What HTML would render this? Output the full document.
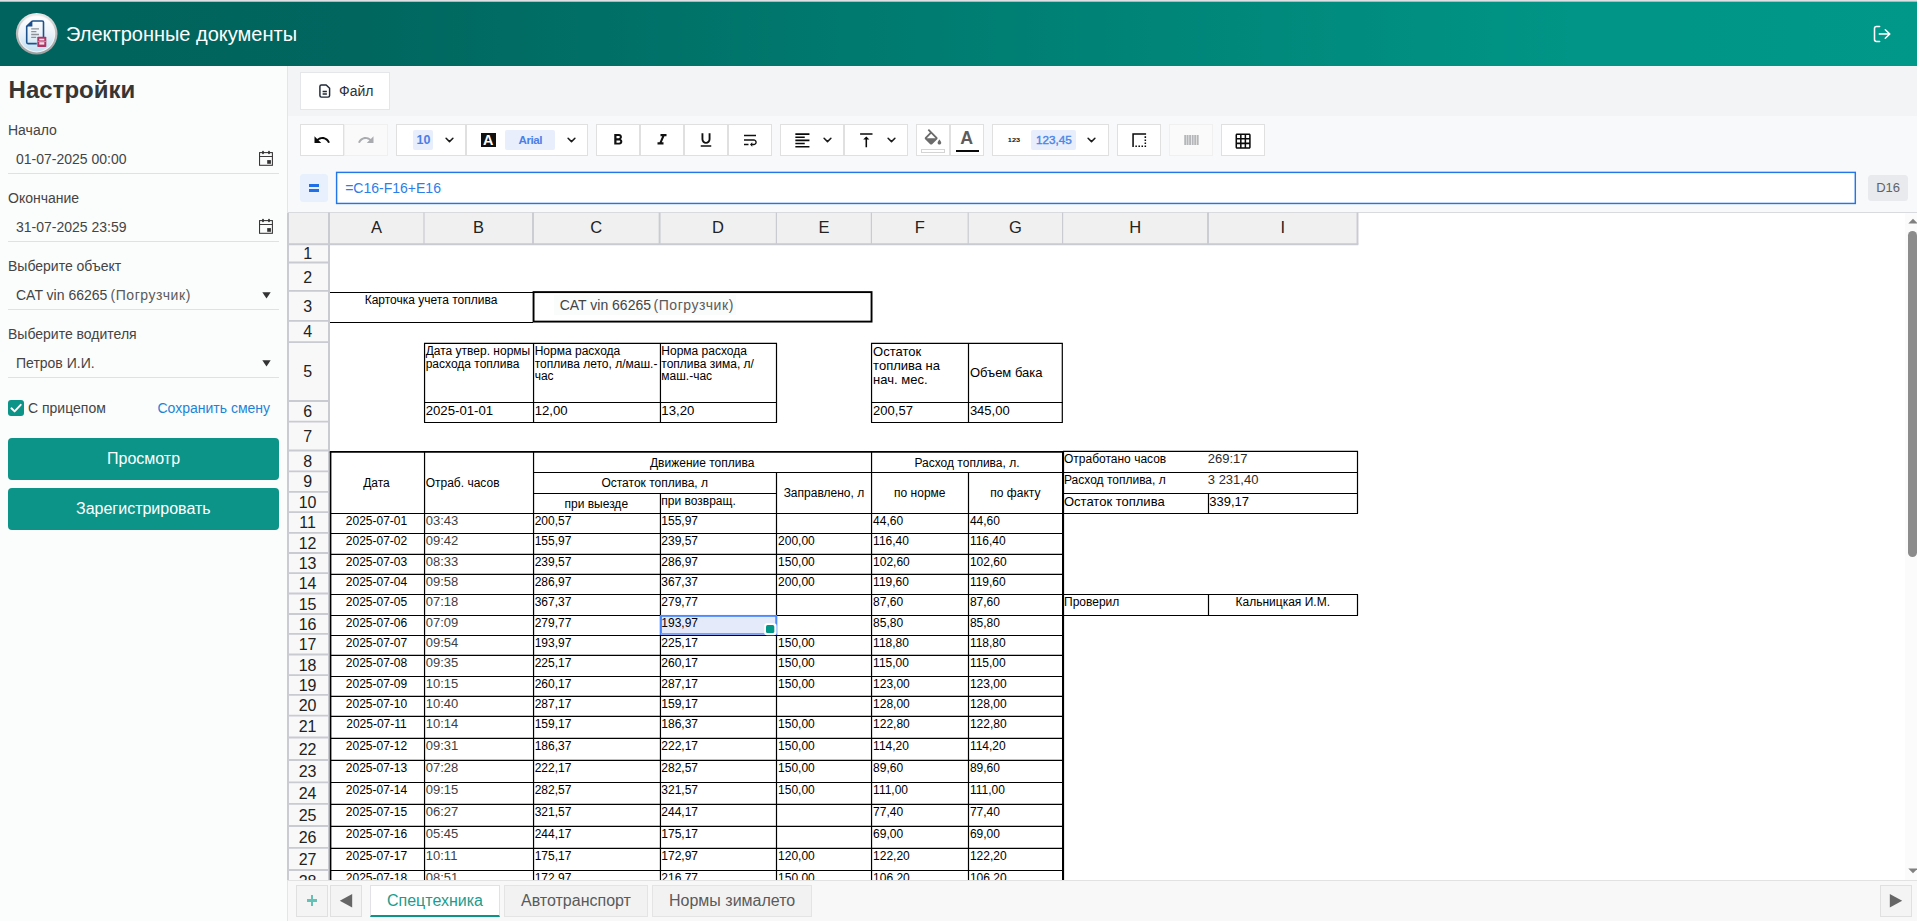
<!DOCTYPE html><html><head><meta charset="utf-8"><title>Электронные документы</title><style>
*{box-sizing:border-box;margin:0;padding:0}
html,body{width:1917px;height:921px;overflow:hidden;background:#fff}
body{font-family:"Liberation Sans",sans-serif;position:relative;color:#333}
.abs{position:absolute}
.t{position:absolute;white-space:nowrap;line-height:1}
#topline{left:0;top:0;width:1917px;height:2px;background:linear-gradient(180deg,#e0e0e4 0,#e0e0e4 55%,#b9b2b6 56%,#b9b2b6 100%)}
#hdr{left:0;top:2px;width:1917px;height:64px;background:linear-gradient(90deg,#00635d 0%,#00665e 18%,#009586 82%,#009889 100%)}
#side{left:0;top:66px;width:288px;height:855px;background:#fbfcfc;border-right:1px solid #e3e5e8}
#band1{left:288px;top:66px;width:1629px;height:50px;background:#f3f4f6}
#band2{left:288px;top:116px;width:1629px;height:96px;background:#f8f9fb}
#sheet{left:288px;top:212px;width:1629px;height:668px;background:#fff;overflow:hidden}
#tabs{left:288px;top:880px;width:1629px;height:41px;background:#f8f8f8;border-top:1px solid #e2e2e2}
.lbl{font-size:14.5px;color:#444}
.inp{font-size:14.5px;color:#444}
.uline{height:1px;background:#dfe1e4;left:8px;width:271px}
.btn{left:8px;width:271px;height:42px;background:#0d9488;border-radius:4px}
.tb{position:absolute;background:#fff;border:1px solid #e0e0e1}
.tb.dis{background:#fafafa;border-color:#f0f0f1}
</style></head><body><div id="topline" class="abs"></div><div id="hdr" class="abs"></div><div id="side" class="abs"></div><div id="band1" class="abs"></div><div id="band2" class="abs"></div><div id="sheet" class="abs"><div class="abs" style="left:-288px;top:-212px;width:1917px;height:921px"><div class="abs" style="left:288px;top:212px;width:1069.5px;height:32px;background:#f0f0f0"></div><div class="abs" style="left:288px;top:244px;width:41px;height:640px;background:#f8f8f8"></div><div class="abs" style="left:554px;top:294.5px;width:182px;height:20.5px;background:#fafbfb"></div><svg class="abs" style="left:0;top:0" width="1917" height="921" viewBox="0 0 1917 921"><path d="M288.00 212.50L1917.00 212.50" stroke="#d9dadd" stroke-width="1.0"/><path d="M288.00 244.20L1358.30 244.20" stroke="#c9cad2" stroke-width="1.9"/><path d="M329.00 212.50L329.00 880.00" stroke="#c9cad2" stroke-width="2.0"/><path d="M424.00 212.50L424.00 244.50" stroke="#c9cad2" stroke-width="1.2"/><path d="M533.00 212.50L533.00 244.50" stroke="#c9cad2" stroke-width="1.9"/><path d="M659.60 212.50L659.60 244.50" stroke="#c9cad2" stroke-width="1.9"/><path d="M776.40 212.50L776.40 244.50" stroke="#c9cad2" stroke-width="1.2"/><path d="M871.40 212.50L871.40 244.50" stroke="#c9cad2" stroke-width="1.2"/><path d="M968.20 212.50L968.20 244.50" stroke="#c9cad2" stroke-width="1.2"/><path d="M1062.60 212.50L1062.60 244.50" stroke="#c9cad2" stroke-width="1.2"/><path d="M1208.00 212.50L1208.00 244.50" stroke="#c9cad2" stroke-width="1.9"/><path d="M1357.50 212.50L1357.50 244.50" stroke="#c9cad2" stroke-width="1.9"/><path d="M288.00 262.50L329.50 262.50" stroke="#c9cad2" stroke-width="1.8"/><path d="M288.00 290.90L329.50 290.90" stroke="#c9cad2" stroke-width="1.8"/><path d="M288.00 320.80L329.50 320.80" stroke="#c9cad2" stroke-width="1.8"/><path d="M288.00 342.20L329.50 342.20" stroke="#c9cad2" stroke-width="1.8"/><path d="M288.00 401.00L329.50 401.00" stroke="#c9cad2" stroke-width="1.8"/><path d="M288.00 421.60L329.50 421.60" stroke="#c9cad2" stroke-width="1.8"/><path d="M288.00 450.50L329.50 450.50" stroke="#c9cad2" stroke-width="1.8"/><path d="M288.00 471.30L329.50 471.30" stroke="#c9cad2" stroke-width="1.8"/><path d="M288.00 491.90L329.50 491.90" stroke="#c9cad2" stroke-width="1.8"/><path d="M288.00 512.20L329.50 512.20" stroke="#c9cad2" stroke-width="1.8"/><path d="M288.00 532.90L329.50 532.90" stroke="#c9cad2" stroke-width="1.8"/><path d="M288.00 553.00L329.50 553.00" stroke="#c9cad2" stroke-width="1.8"/><path d="M288.00 573.10L329.50 573.10" stroke="#c9cad2" stroke-width="1.8"/><path d="M288.00 593.50L329.50 593.50" stroke="#c9cad2" stroke-width="1.8"/><path d="M288.00 614.00L329.50 614.00" stroke="#c9cad2" stroke-width="1.8"/><path d="M288.00 633.90L329.50 633.90" stroke="#c9cad2" stroke-width="1.8"/><path d="M288.00 654.50L329.50 654.50" stroke="#c9cad2" stroke-width="1.8"/><path d="M288.00 675.10L329.50 675.10" stroke="#c9cad2" stroke-width="1.8"/><path d="M288.00 694.90L329.50 694.90" stroke="#c9cad2" stroke-width="1.8"/><path d="M288.00 715.60L329.50 715.60" stroke="#c9cad2" stroke-width="1.8"/><path d="M288.00 737.50L329.50 737.50" stroke="#c9cad2" stroke-width="1.8"/><path d="M288.00 760.00L329.50 760.00" stroke="#c9cad2" stroke-width="1.8"/><path d="M288.00 782.30L329.50 782.30" stroke="#c9cad2" stroke-width="1.8"/><path d="M288.00 803.80L329.50 803.80" stroke="#c9cad2" stroke-width="1.8"/><path d="M288.00 826.00L329.50 826.00" stroke="#c9cad2" stroke-width="1.8"/><path d="M288.00 847.80L329.50 847.80" stroke="#c9cad2" stroke-width="1.8"/><path d="M288.00 870.00L329.50 870.00" stroke="#c9cad2" stroke-width="1.8"/><path d="M330.00 292.50L533.00 292.50" stroke="#000" stroke-width="1.2"/><path d="M330.00 322.50L533.00 322.50" stroke="#000" stroke-width="1.2"/><rect x="533.55" y="292.10" width="338.00" height="29.50" fill="none" stroke="#000" stroke-width="1.9"/><path d="M424.05 343.30L777.00 343.30" stroke="#000" stroke-width="1.2"/><path d="M424.05 402.50L777.00 402.50" stroke="#000" stroke-width="1.2"/><path d="M424.05 422.50L777.00 422.50" stroke="#000" stroke-width="1.2"/><path d="M424.55 343.30L424.55 422.50" stroke="#000" stroke-width="1.2"/><path d="M533.55 343.30L533.55 422.50" stroke="#000" stroke-width="1.2"/><path d="M660.45 343.30L660.45 422.50" stroke="#000" stroke-width="1.2"/><path d="M776.50 343.30L776.50 422.50" stroke="#000" stroke-width="1.2"/><path d="M871.05 343.30L1062.80 343.30" stroke="#000" stroke-width="1.2"/><path d="M871.05 402.50L1062.80 402.50" stroke="#000" stroke-width="1.2"/><path d="M871.05 422.50L1062.80 422.50" stroke="#000" stroke-width="1.2"/><path d="M871.55 343.30L871.55 422.50" stroke="#000" stroke-width="1.2"/><path d="M968.50 343.30L968.50 422.50" stroke="#000" stroke-width="1.2"/><path d="M1062.30 343.30L1062.30 422.50" stroke="#000" stroke-width="1.2"/><path d="M329.80 451.85L1064.00 451.85" stroke="#000" stroke-width="1.9"/><path d="M330.60 451.85L330.60 881.00" stroke="#000" stroke-width="1.6"/><path d="M1063.05 450.95L1063.05 881.00" stroke="#000" stroke-width="2.1"/><path d="M424.55 451.85L424.55 881.00" stroke="#000" stroke-width="1.2"/><path d="M533.55 451.85L533.55 881.00" stroke="#000" stroke-width="1.2"/><path d="M871.55 451.85L871.55 881.00" stroke="#000" stroke-width="1.2"/><path d="M660.45 493.50L660.45 881.00" stroke="#000" stroke-width="1.2"/><path d="M776.50 472.50L776.50 881.00" stroke="#000" stroke-width="1.2"/><path d="M968.50 472.50L968.50 881.00" stroke="#000" stroke-width="1.2"/><path d="M533.55 472.50L1063.05 472.50" stroke="#000" stroke-width="1.2"/><path d="M533.55 493.50L776.50 493.50" stroke="#000" stroke-width="1.2"/><path d="M330.00 513.50L1063.05 513.50" stroke="#000" stroke-width="1.2"/><path d="M330.00 533.50L1063.05 533.50" stroke="#000" stroke-width="1.2"/><path d="M330.00 554.45L1063.05 554.45" stroke="#000" stroke-width="1.2"/><path d="M330.00 574.45L1063.05 574.45" stroke="#000" stroke-width="1.2"/><path d="M330.00 594.50L1063.05 594.50" stroke="#000" stroke-width="1.2"/><path d="M330.00 615.50L1063.05 615.50" stroke="#000" stroke-width="1.2"/><path d="M330.00 635.50L1063.05 635.50" stroke="#000" stroke-width="1.2"/><path d="M330.00 655.45L1063.05 655.45" stroke="#000" stroke-width="1.2"/><path d="M330.00 676.50L1063.05 676.50" stroke="#000" stroke-width="1.2"/><path d="M330.00 696.45L1063.05 696.45" stroke="#000" stroke-width="1.2"/><path d="M330.00 716.45L1063.05 716.45" stroke="#000" stroke-width="1.2"/><path d="M330.00 738.45L1063.05 738.45" stroke="#000" stroke-width="1.2"/><path d="M330.00 760.45L1063.05 760.45" stroke="#000" stroke-width="1.2"/><path d="M330.00 782.50L1063.05 782.50" stroke="#000" stroke-width="1.2"/><path d="M330.00 804.45L1063.05 804.45" stroke="#000" stroke-width="1.2"/><path d="M330.00 826.45L1063.05 826.45" stroke="#000" stroke-width="1.2"/><path d="M330.00 848.45L1063.05 848.45" stroke="#000" stroke-width="1.2"/><path d="M330.00 870.50L1063.05 870.50" stroke="#000" stroke-width="1.2"/><path d="M1063.05 451.45L1358.00 451.45" stroke="#000" stroke-width="1.2"/><path d="M1063.05 472.50L1358.00 472.50" stroke="#000" stroke-width="1.2"/><path d="M1063.05 493.50L1358.00 493.50" stroke="#000" stroke-width="1.2"/><path d="M1063.05 513.50L1358.00 513.50" stroke="#000" stroke-width="1.2"/><path d="M1357.50 451.00L1357.50 513.50" stroke="#000" stroke-width="1.2"/><path d="M1208.50 493.50L1208.50 513.50" stroke="#000" stroke-width="1.2"/><path d="M1063.05 594.50L1358.00 594.50" stroke="#000" stroke-width="1.2"/><path d="M1063.05 615.50L1358.00 615.50" stroke="#000" stroke-width="1.2"/><path d="M1208.50 594.50L1208.50 615.50" stroke="#000" stroke-width="1.2"/><path d="M1357.50 594.50L1357.50 615.50" stroke="#000" stroke-width="1.2"/><rect x="661.0" y="615.9" width="115.2" height="18.1" fill="#e5eafb" stroke="#4b89ff" stroke-width="1.9"/><path d="M661 634.1H776" stroke="#86aaf8" stroke-width="1.6"/><rect x="764.2" y="623.3" width="12.4" height="11.9" rx="2.6" fill="#fff"/><rect x="766.0" y="625.1" width="8.3" height="8.0" rx="1.6" fill="#009688"/></svg><span class="t" style="left:356.50px;width:40px;text-align:center;top:219px;font-size:16.5px;color:#222">A</span><span class="t" style="left:458.50px;width:40px;text-align:center;top:219px;font-size:16.5px;color:#222">B</span><span class="t" style="left:576.30px;width:40px;text-align:center;top:219px;font-size:16.5px;color:#222">C</span><span class="t" style="left:698.00px;width:40px;text-align:center;top:219px;font-size:16.5px;color:#222">D</span><span class="t" style="left:803.90px;width:40px;text-align:center;top:219px;font-size:16.5px;color:#222">E</span><span class="t" style="left:899.80px;width:40px;text-align:center;top:219px;font-size:16.5px;color:#222">F</span><span class="t" style="left:995.40px;width:40px;text-align:center;top:219px;font-size:16.5px;color:#222">G</span><span class="t" style="left:1115.30px;width:40px;text-align:center;top:219px;font-size:16.5px;color:#222">H</span><span class="t" style="left:1262.75px;width:40px;text-align:center;top:219px;font-size:16.5px;color:#222">I</span><span class="t" style="left:287.6px;width:40px;text-align:center;top:246px;font-size:16px;color:#222">1</span><span class="t" style="left:287.6px;width:40px;text-align:center;top:270px;font-size:16px;color:#222">2</span><span class="t" style="left:287.6px;width:40px;text-align:center;top:299px;font-size:16px;color:#222">3</span><span class="t" style="left:287.6px;width:40px;text-align:center;top:324px;font-size:16px;color:#222">4</span><span class="t" style="left:287.6px;width:40px;text-align:center;top:364px;font-size:16px;color:#222">5</span><span class="t" style="left:287.6px;width:40px;text-align:center;top:404px;font-size:16px;color:#222">6</span><span class="t" style="left:287.6px;width:40px;text-align:center;top:429px;font-size:16px;color:#222">7</span><span class="t" style="left:287.6px;width:40px;text-align:center;top:454px;font-size:16px;color:#222">8</span><span class="t" style="left:287.6px;width:40px;text-align:center;top:474px;font-size:16px;color:#222">9</span><span class="t" style="left:287.6px;width:40px;text-align:center;top:495px;font-size:16px;color:#222">10</span><span class="t" style="left:287.6px;width:40px;text-align:center;top:515px;font-size:16px;color:#222">11</span><span class="t" style="left:287.6px;width:40px;text-align:center;top:536px;font-size:16px;color:#222">12</span><span class="t" style="left:287.6px;width:40px;text-align:center;top:556px;font-size:16px;color:#222">13</span><span class="t" style="left:287.6px;width:40px;text-align:center;top:576px;font-size:16px;color:#222">14</span><span class="t" style="left:287.6px;width:40px;text-align:center;top:597px;font-size:16px;color:#222">15</span><span class="t" style="left:287.6px;width:40px;text-align:center;top:617px;font-size:16px;color:#222">16</span><span class="t" style="left:287.6px;width:40px;text-align:center;top:637px;font-size:16px;color:#222">17</span><span class="t" style="left:287.6px;width:40px;text-align:center;top:658px;font-size:16px;color:#222">18</span><span class="t" style="left:287.6px;width:40px;text-align:center;top:678px;font-size:16px;color:#222">19</span><span class="t" style="left:287.6px;width:40px;text-align:center;top:698px;font-size:16px;color:#222">20</span><span class="t" style="left:287.6px;width:40px;text-align:center;top:719px;font-size:16px;color:#222">21</span><span class="t" style="left:287.6px;width:40px;text-align:center;top:742px;font-size:16px;color:#222">22</span><span class="t" style="left:287.6px;width:40px;text-align:center;top:764px;font-size:16px;color:#222">23</span><span class="t" style="left:287.6px;width:40px;text-align:center;top:786px;font-size:16px;color:#222">24</span><span class="t" style="left:287.6px;width:40px;text-align:center;top:808px;font-size:16px;color:#222">25</span><span class="t" style="left:287.6px;width:40px;text-align:center;top:830px;font-size:16px;color:#222">26</span><span class="t" style="left:287.6px;width:40px;text-align:center;top:852px;font-size:16px;color:#222">27</span><span class="t" style="left:287.6px;width:40px;text-align:center;top:874px;font-size:16px;color:#222">28</span><span class="t" style="left:329.00px;width:204.00px;text-align:center;top:294px;font-size:12px;color:#000">Карточка учета топлива</span><span class="t" style="left:559.7px;top:298px;font-size:14px;color:#444;font-weight:400;">CAT vin 66265</span><span class="t" style="left:653.4px;top:298px;font-size:14px;color:#5a5a5a;font-weight:400;letter-spacing:0.58px;">(Погрузчик)</span><span class="t" style="left:425.7px;top:345px;font-size:12px;color:#000;font-weight:400;">Дата утвер. нормы</span><span class="t" style="left:425.7px;top:358px;font-size:12px;color:#000;font-weight:400;">расхода топлива</span><span class="t" style="left:534.7px;top:345px;font-size:12px;color:#000;font-weight:400;">Норма расхода</span><span class="t" style="left:534.7px;top:358px;font-size:12px;color:#000;font-weight:400;">топлива лето, л/маш.-</span><span class="t" style="left:534.7px;top:370px;font-size:12px;color:#000;font-weight:400;">час</span><span class="t" style="left:661.3px;top:345px;font-size:12px;color:#000;font-weight:400;">Норма расхода</span><span class="t" style="left:661.3px;top:358px;font-size:12px;color:#000;font-weight:400;">топлива зима, л/</span><span class="t" style="left:661.3px;top:370px;font-size:12px;color:#000;font-weight:400;">маш.-час</span><span class="t" style="left:873.1px;top:345px;font-size:13px;color:#000;font-weight:400;">Остаток</span><span class="t" style="left:873.1px;top:359px;font-size:13px;color:#000;font-weight:400;">топлива на</span><span class="t" style="left:873.1px;top:373px;font-size:13px;color:#000;font-weight:400;">нач. мес.</span><span class="t" style="left:969.9px;top:366px;font-size:13px;color:#000;font-weight:400;">Объем бака</span><span class="t" style="left:425.7px;top:404px;font-size:13.2px;color:#000;font-weight:400;">2025-01-01</span><span class="t" style="left:534.7px;top:404px;font-size:13.2px;color:#000;font-weight:400;">12,00</span><span class="t" style="left:661.3px;top:404px;font-size:13.2px;color:#000;font-weight:400;">13,20</span><span class="t" style="left:873.1px;top:404px;font-size:13px;color:#000;font-weight:400;">200,57</span><span class="t" style="left:969.9px;top:404px;font-size:13px;color:#000;font-weight:400;">345,00</span><span class="t" style="left:329.00px;width:95.00px;text-align:center;top:477px;font-size:12px;color:#000">Дата</span><span class="t" style="left:425.7px;top:477px;font-size:12px;color:#000;font-weight:400;">Отраб. часов</span><span class="t" style="left:533.00px;width:338.40px;text-align:center;top:457px;font-size:12px;color:#000">Движение топлива</span><span class="t" style="left:533.00px;width:243.40px;text-align:center;top:477px;font-size:12px;color:#000">Остаток топлива, л</span><span class="t" style="left:533.00px;width:126.60px;text-align:center;top:498px;font-size:12px;color:#000">при выезде</span><span class="t" style="left:661.3px;top:495px;font-size:12px;color:#000;font-weight:400;">при возвращ.</span><span class="t" style="left:776.40px;width:95.00px;text-align:center;top:487px;font-size:12px;color:#000">Заправлено, л</span><span class="t" style="left:871.40px;width:191.20px;text-align:center;top:457px;font-size:12px;color:#000">Расход топлива, л.</span><span class="t" style="left:871.40px;width:96.80px;text-align:center;top:487px;font-size:12px;color:#000">по норме</span><span class="t" style="left:968.20px;width:94.40px;text-align:center;top:487px;font-size:12px;color:#000">по факту</span><span class="t" style="left:1064.0px;top:453px;font-size:12px;color:#000;font-weight:400;">Отработано часов</span><span class="t" style="left:1207.8px;top:452px;font-size:13px;color:#2b2b2b;font-weight:400;">269:17</span><span class="t" style="left:1064.0px;top:474px;font-size:12px;color:#000;font-weight:400;">Расход топлива, л</span><span class="t" style="left:1207.8px;top:473px;font-size:13px;color:#2b2b2b;font-weight:400;">3 231,40</span><span class="t" style="left:1064.0px;top:495px;font-size:13px;color:#000;font-weight:400;">Остаток топлива</span><span class="t" style="left:1209.2px;top:495px;font-size:13px;color:#000;font-weight:400;">339,17</span><span class="t" style="left:1064.0px;top:596px;font-size:12px;color:#000;font-weight:400;">Проверил</span><span class="t" style="left:1208.00px;width:149.50px;text-align:center;top:596px;font-size:12px;color:#000">Кальницкая И.М.</span><span class="t" style="left:329.00px;width:95.00px;text-align:center;top:515px;font-size:12px;color:#000">2025-07-01</span><span class="t" style="left:425.8px;top:514px;font-size:13px;color:#404040;font-weight:400;">03:43</span><span class="t" style="left:534.7px;top:515px;font-size:12px;color:#000;font-weight:400;">200,57</span><span class="t" style="left:661.3px;top:515px;font-size:12px;color:#000;font-weight:400;">155,97</span><span class="t" style="left:873.1px;top:515px;font-size:12px;color:#000;font-weight:400;">44,60</span><span class="t" style="left:969.9px;top:515px;font-size:12px;color:#000;font-weight:400;">44,60</span><span class="t" style="left:329.00px;width:95.00px;text-align:center;top:535px;font-size:12px;color:#000">2025-07-02</span><span class="t" style="left:425.8px;top:534px;font-size:13px;color:#404040;font-weight:400;">09:42</span><span class="t" style="left:534.7px;top:535px;font-size:12px;color:#000;font-weight:400;">155,97</span><span class="t" style="left:661.3px;top:535px;font-size:12px;color:#000;font-weight:400;">239,57</span><span class="t" style="left:778.1px;top:535px;font-size:12px;color:#000;font-weight:400;">200,00</span><span class="t" style="left:873.1px;top:535px;font-size:12px;color:#000;font-weight:400;">116,40</span><span class="t" style="left:969.9px;top:535px;font-size:12px;color:#000;font-weight:400;">116,40</span><span class="t" style="left:329.00px;width:95.00px;text-align:center;top:556px;font-size:12px;color:#000">2025-07-03</span><span class="t" style="left:425.8px;top:555px;font-size:13px;color:#404040;font-weight:400;">08:33</span><span class="t" style="left:534.7px;top:556px;font-size:12px;color:#000;font-weight:400;">239,57</span><span class="t" style="left:661.3px;top:556px;font-size:12px;color:#000;font-weight:400;">286,97</span><span class="t" style="left:778.1px;top:556px;font-size:12px;color:#000;font-weight:400;">150,00</span><span class="t" style="left:873.1px;top:556px;font-size:12px;color:#000;font-weight:400;">102,60</span><span class="t" style="left:969.9px;top:556px;font-size:12px;color:#000;font-weight:400;">102,60</span><span class="t" style="left:329.00px;width:95.00px;text-align:center;top:576px;font-size:12px;color:#000">2025-07-04</span><span class="t" style="left:425.8px;top:575px;font-size:13px;color:#404040;font-weight:400;">09:58</span><span class="t" style="left:534.7px;top:576px;font-size:12px;color:#000;font-weight:400;">286,97</span><span class="t" style="left:661.3px;top:576px;font-size:12px;color:#000;font-weight:400;">367,37</span><span class="t" style="left:778.1px;top:576px;font-size:12px;color:#000;font-weight:400;">200,00</span><span class="t" style="left:873.1px;top:576px;font-size:12px;color:#000;font-weight:400;">119,60</span><span class="t" style="left:969.9px;top:576px;font-size:12px;color:#000;font-weight:400;">119,60</span><span class="t" style="left:329.00px;width:95.00px;text-align:center;top:596px;font-size:12px;color:#000">2025-07-05</span><span class="t" style="left:425.8px;top:595px;font-size:13px;color:#404040;font-weight:400;">07:18</span><span class="t" style="left:534.7px;top:596px;font-size:12px;color:#000;font-weight:400;">367,37</span><span class="t" style="left:661.3px;top:596px;font-size:12px;color:#000;font-weight:400;">279,77</span><span class="t" style="left:873.1px;top:596px;font-size:12px;color:#000;font-weight:400;">87,60</span><span class="t" style="left:969.9px;top:596px;font-size:12px;color:#000;font-weight:400;">87,60</span><span class="t" style="left:329.00px;width:95.00px;text-align:center;top:617px;font-size:12px;color:#000">2025-07-06</span><span class="t" style="left:425.8px;top:616px;font-size:13px;color:#404040;font-weight:400;">07:09</span><span class="t" style="left:534.7px;top:617px;font-size:12px;color:#000;font-weight:400;">279,77</span><span class="t" style="left:661.3px;top:617px;font-size:12px;color:#000;font-weight:400;">193,97</span><span class="t" style="left:873.1px;top:617px;font-size:12px;color:#000;font-weight:400;">85,80</span><span class="t" style="left:969.9px;top:617px;font-size:12px;color:#000;font-weight:400;">85,80</span><span class="t" style="left:329.00px;width:95.00px;text-align:center;top:637px;font-size:12px;color:#000">2025-07-07</span><span class="t" style="left:425.8px;top:636px;font-size:13px;color:#404040;font-weight:400;">09:54</span><span class="t" style="left:534.7px;top:637px;font-size:12px;color:#000;font-weight:400;">193,97</span><span class="t" style="left:661.3px;top:637px;font-size:12px;color:#000;font-weight:400;">225,17</span><span class="t" style="left:778.1px;top:637px;font-size:12px;color:#000;font-weight:400;">150,00</span><span class="t" style="left:873.1px;top:637px;font-size:12px;color:#000;font-weight:400;">118,80</span><span class="t" style="left:969.9px;top:637px;font-size:12px;color:#000;font-weight:400;">118,80</span><span class="t" style="left:329.00px;width:95.00px;text-align:center;top:657px;font-size:12px;color:#000">2025-07-08</span><span class="t" style="left:425.8px;top:656px;font-size:13px;color:#404040;font-weight:400;">09:35</span><span class="t" style="left:534.7px;top:657px;font-size:12px;color:#000;font-weight:400;">225,17</span><span class="t" style="left:661.3px;top:657px;font-size:12px;color:#000;font-weight:400;">260,17</span><span class="t" style="left:778.1px;top:657px;font-size:12px;color:#000;font-weight:400;">150,00</span><span class="t" style="left:873.1px;top:657px;font-size:12px;color:#000;font-weight:400;">115,00</span><span class="t" style="left:969.9px;top:657px;font-size:12px;color:#000;font-weight:400;">115,00</span><span class="t" style="left:329.00px;width:95.00px;text-align:center;top:678px;font-size:12px;color:#000">2025-07-09</span><span class="t" style="left:425.8px;top:677px;font-size:13px;color:#404040;font-weight:400;">10:15</span><span class="t" style="left:534.7px;top:678px;font-size:12px;color:#000;font-weight:400;">260,17</span><span class="t" style="left:661.3px;top:678px;font-size:12px;color:#000;font-weight:400;">287,17</span><span class="t" style="left:778.1px;top:678px;font-size:12px;color:#000;font-weight:400;">150,00</span><span class="t" style="left:873.1px;top:678px;font-size:12px;color:#000;font-weight:400;">123,00</span><span class="t" style="left:969.9px;top:678px;font-size:12px;color:#000;font-weight:400;">123,00</span><span class="t" style="left:329.00px;width:95.00px;text-align:center;top:698px;font-size:12px;color:#000">2025-07-10</span><span class="t" style="left:425.8px;top:697px;font-size:13px;color:#404040;font-weight:400;">10:40</span><span class="t" style="left:534.7px;top:698px;font-size:12px;color:#000;font-weight:400;">287,17</span><span class="t" style="left:661.3px;top:698px;font-size:12px;color:#000;font-weight:400;">159,17</span><span class="t" style="left:873.1px;top:698px;font-size:12px;color:#000;font-weight:400;">128,00</span><span class="t" style="left:969.9px;top:698px;font-size:12px;color:#000;font-weight:400;">128,00</span><span class="t" style="left:329.00px;width:95.00px;text-align:center;top:718px;font-size:12px;color:#000">2025-07-11</span><span class="t" style="left:425.8px;top:717px;font-size:13px;color:#404040;font-weight:400;">10:14</span><span class="t" style="left:534.7px;top:718px;font-size:12px;color:#000;font-weight:400;">159,17</span><span class="t" style="left:661.3px;top:718px;font-size:12px;color:#000;font-weight:400;">186,37</span><span class="t" style="left:778.1px;top:718px;font-size:12px;color:#000;font-weight:400;">150,00</span><span class="t" style="left:873.1px;top:718px;font-size:12px;color:#000;font-weight:400;">122,80</span><span class="t" style="left:969.9px;top:718px;font-size:12px;color:#000;font-weight:400;">122,80</span><span class="t" style="left:329.00px;width:95.00px;text-align:center;top:740px;font-size:12px;color:#000">2025-07-12</span><span class="t" style="left:425.8px;top:739px;font-size:13px;color:#404040;font-weight:400;">09:31</span><span class="t" style="left:534.7px;top:740px;font-size:12px;color:#000;font-weight:400;">186,37</span><span class="t" style="left:661.3px;top:740px;font-size:12px;color:#000;font-weight:400;">222,17</span><span class="t" style="left:778.1px;top:740px;font-size:12px;color:#000;font-weight:400;">150,00</span><span class="t" style="left:873.1px;top:740px;font-size:12px;color:#000;font-weight:400;">114,20</span><span class="t" style="left:969.9px;top:740px;font-size:12px;color:#000;font-weight:400;">114,20</span><span class="t" style="left:329.00px;width:95.00px;text-align:center;top:762px;font-size:12px;color:#000">2025-07-13</span><span class="t" style="left:425.8px;top:761px;font-size:13px;color:#404040;font-weight:400;">07:28</span><span class="t" style="left:534.7px;top:762px;font-size:12px;color:#000;font-weight:400;">222,17</span><span class="t" style="left:661.3px;top:762px;font-size:12px;color:#000;font-weight:400;">282,57</span><span class="t" style="left:778.1px;top:762px;font-size:12px;color:#000;font-weight:400;">150,00</span><span class="t" style="left:873.1px;top:762px;font-size:12px;color:#000;font-weight:400;">89,60</span><span class="t" style="left:969.9px;top:762px;font-size:12px;color:#000;font-weight:400;">89,60</span><span class="t" style="left:329.00px;width:95.00px;text-align:center;top:784px;font-size:12px;color:#000">2025-07-14</span><span class="t" style="left:425.8px;top:783px;font-size:13px;color:#404040;font-weight:400;">09:15</span><span class="t" style="left:534.7px;top:784px;font-size:12px;color:#000;font-weight:400;">282,57</span><span class="t" style="left:661.3px;top:784px;font-size:12px;color:#000;font-weight:400;">321,57</span><span class="t" style="left:778.1px;top:784px;font-size:12px;color:#000;font-weight:400;">150,00</span><span class="t" style="left:873.1px;top:784px;font-size:12px;color:#000;font-weight:400;">111,00</span><span class="t" style="left:969.9px;top:784px;font-size:12px;color:#000;font-weight:400;">111,00</span><span class="t" style="left:329.00px;width:95.00px;text-align:center;top:806px;font-size:12px;color:#000">2025-07-15</span><span class="t" style="left:425.8px;top:805px;font-size:13px;color:#404040;font-weight:400;">06:27</span><span class="t" style="left:534.7px;top:806px;font-size:12px;color:#000;font-weight:400;">321,57</span><span class="t" style="left:661.3px;top:806px;font-size:12px;color:#000;font-weight:400;">244,17</span><span class="t" style="left:873.1px;top:806px;font-size:12px;color:#000;font-weight:400;">77,40</span><span class="t" style="left:969.9px;top:806px;font-size:12px;color:#000;font-weight:400;">77,40</span><span class="t" style="left:329.00px;width:95.00px;text-align:center;top:828px;font-size:12px;color:#000">2025-07-16</span><span class="t" style="left:425.8px;top:827px;font-size:13px;color:#404040;font-weight:400;">05:45</span><span class="t" style="left:534.7px;top:828px;font-size:12px;color:#000;font-weight:400;">244,17</span><span class="t" style="left:661.3px;top:828px;font-size:12px;color:#000;font-weight:400;">175,17</span><span class="t" style="left:873.1px;top:828px;font-size:12px;color:#000;font-weight:400;">69,00</span><span class="t" style="left:969.9px;top:828px;font-size:12px;color:#000;font-weight:400;">69,00</span><span class="t" style="left:329.00px;width:95.00px;text-align:center;top:850px;font-size:12px;color:#000">2025-07-17</span><span class="t" style="left:425.8px;top:849px;font-size:13px;color:#404040;font-weight:400;">10:11</span><span class="t" style="left:534.7px;top:850px;font-size:12px;color:#000;font-weight:400;">175,17</span><span class="t" style="left:661.3px;top:850px;font-size:12px;color:#000;font-weight:400;">172,97</span><span class="t" style="left:778.1px;top:850px;font-size:12px;color:#000;font-weight:400;">120,00</span><span class="t" style="left:873.1px;top:850px;font-size:12px;color:#000;font-weight:400;">122,20</span><span class="t" style="left:969.9px;top:850px;font-size:12px;color:#000;font-weight:400;">122,20</span><span class="t" style="left:329.00px;width:95.00px;text-align:center;top:872px;font-size:12px;color:#000">2025-07-18</span><span class="t" style="left:425.8px;top:871px;font-size:13px;color:#404040;font-weight:400;">08:51</span><span class="t" style="left:534.7px;top:872px;font-size:12px;color:#000;font-weight:400;">172,97</span><span class="t" style="left:661.3px;top:872px;font-size:12px;color:#000;font-weight:400;">216,77</span><span class="t" style="left:778.1px;top:872px;font-size:12px;color:#000;font-weight:400;">150,00</span><span class="t" style="left:873.1px;top:872px;font-size:12px;color:#000;font-weight:400;">106,20</span><span class="t" style="left:969.9px;top:872px;font-size:12px;color:#000;font-weight:400;">106,20</span><div class="abs" style="left:1905px;top:213px;width:12px;height:667px;background:#fbfbfb"></div><svg class="abs" style="left:1907.6px;top:218.4px" width="10" height="6" viewBox="0 0 10 6"><path d="M0.3 5.5L5 0.7L9.7 5.5Z" fill="#808080"/></svg><svg class="abs" style="left:1907.6px;top:867.6px" width="10" height="6" viewBox="0 0 10 6"><path d="M0.3 0.5L5 5.3L9.7 0.5Z" fill="#808080"/></svg><div class="abs" style="left:1908px;top:230.6px;width:9px;height:326px;background:#8c8c8c;border-radius:4.5px"></div></div></div><div id="tabs" class="abs"></div><svg class="abs" style="left:12px;top:9px" width="50" height="50" viewBox="12 9 50 50">
<defs>
<linearGradient id="lg1" x1="0" y1="0" x2="0" y2="1"><stop offset="0" stop-color="#ececec"/><stop offset="0.4" stop-color="#bdbfc1"/><stop offset="1" stop-color="#9c9fa1"/></linearGradient>
<linearGradient id="lg2" x1="0" y1="0" x2="0" y2="1"><stop offset="0" stop-color="#ffffff"/><stop offset="0.45" stop-color="#eef4fa"/><stop offset="1" stop-color="#c3e0f2"/></linearGradient>
</defs>
<circle cx="36.7" cy="33.8" r="20.8" fill="url(#lg1)"/>
<circle cx="36.7" cy="33.8" r="18.6" fill="#f4f4f4"/><circle cx="36.7" cy="33.8" r="17.6" fill="url(#lg2)"/>
<path d="M32.2 21H42.2Q43.5 21 43.5 22.3V37M36.8 43.6H28Q26.7 43.6 26.7 42.3V26.4L32.2 21" fill="none" stroke="#1d528d" stroke-width="1.6" stroke-linejoin="round"/>
<path d="M32.4 20.8V26.6H26.6Z" fill="#1b4f8c"/>
<path d="M31.2 28.9H39M31.2 31.7H36.4M31.2 34.5H39M31.2 37.4H36.2" stroke="#8b9197" stroke-width="1.3"/>
<rect x="37.3" y="36.8" width="9" height="10.2" rx="0.8" fill="#ad3564"/>
<rect x="39.3" y="38.7" width="5" height="1.7" fill="#f7dfe8"/>
<rect x="39.3" y="42.2" width="5" height="2.4" fill="#f7dfe8"/>
<rect x="37.3" y="40.9" width="9" height="0.9" fill="#d88fae"/>
</svg><span class="t" style="left:66px;top:24px;font-size:20px;color:#fff;font-weight:400;">Электронные документы</span><svg class="abs" style="left:1870px;top:22px" width="24" height="24" viewBox="1870 22 24 24" fill="none" stroke="#fff" stroke-width="1.55" stroke-linecap="round" stroke-linejoin="round">
<path d="M1879.6 26.5H1876.4Q1874.5 26.5 1874.5 28.4V39.5Q1874.5 41.4 1876.4 41.4H1879.6"/><path d="M1879.3 34H1889.6M1885.3 29.7L1889.8 34L1885.3 38.3"/></svg><span class="t" style="left:8.6px;top:78px;font-size:24px;color:#363636;font-weight:700;">Настройки</span><span class="t" style="left:8px;top:123px;font-size:14px;color:#444;font-weight:400;">Начало</span><span class="t" style="left:16px;top:152px;font-size:14px;color:#444;font-weight:400;">01-07-2025 00:00</span><div class="abs uline" style="top:173px"></div><span class="t" style="left:8px;top:191px;font-size:14px;color:#444;font-weight:400;">Окончание</span><span class="t" style="left:16px;top:220px;font-size:14px;color:#444;font-weight:400;">31-07-2025 23:59</span><div class="abs uline" style="top:241px"></div><span class="t" style="left:8px;top:259px;font-size:14px;color:#444;font-weight:400;">Выберите объект</span><span class="t" style="left:16px;top:288px;font-size:14px;color:#444;font-weight:400;">CAT vin 66265</span><span class="t" style="left:110.4px;top:288px;font-size:14px;color:#5a5a5a;font-weight:400;letter-spacing:0.58px;">(Погрузчик)</span><div class="abs uline" style="top:309px"></div><span class="t" style="left:8px;top:327px;font-size:14px;color:#444;font-weight:400;">Выберите водителя</span><span class="t" style="left:16px;top:356px;font-size:14px;color:#444;font-weight:400;">Петров И.И.</span><div class="abs uline" style="top:377px"></div><svg class="abs" style="left:256px;top:148px" width="24" height="24" viewBox="256 148 24 24"><rect x="259.55" y="152.6" width="12.85" height="12.7" fill="none" stroke="#333" stroke-width="1.05"/><path d="M259.5 156.5H272.4" stroke="#333" stroke-width="0.95"/><path d="M263 151.7V153.3M269 151.7V153.3" stroke="#333" stroke-width="1.8" stroke-linecap="round"/><rect x="267.2" y="160.1" width="3.7" height="3.7" fill="#333"/></svg><svg class="abs" style="left:256px;top:216px" width="24" height="24" viewBox="256 148 24 24"><rect x="259.55" y="152.6" width="12.85" height="12.7" fill="none" stroke="#333" stroke-width="1.05"/><path d="M259.5 156.5H272.4" stroke="#333" stroke-width="0.95"/><path d="M263 151.7V153.3M269 151.7V153.3" stroke="#333" stroke-width="1.8" stroke-linecap="round"/><rect x="267.2" y="160.1" width="3.7" height="3.7" fill="#333"/></svg><svg class="abs" style="left:261.5px;top:291.6px" width="9" height="7" viewBox="0 0 9 7"><path d="M0.3 0.3H8.7L4.5 6.6Z" fill="#333"/></svg><svg class="abs" style="left:261.5px;top:359.6px" width="9" height="7" viewBox="0 0 9 7"><path d="M0.3 0.3H8.7L4.5 6.6Z" fill="#333"/></svg><div class="abs" style="left:8px;top:400px;width:16px;height:16px;background:#0d9488;border-radius:3px"></div><svg class="abs" style="left:8px;top:400px" width="16" height="16" viewBox="0 0 16 16"><path d="M3.4 8.3L6.6 11.4L12.7 4.8" fill="none" stroke="#fff" stroke-width="1.9" stroke-linecap="round" stroke-linejoin="round"/></svg><span class="t" style="left:28px;top:401px;font-size:14px;color:#444;font-weight:400;">С прицепом</span><span class="t" style="left:157.5px;top:401px;font-size:14px;color:#1c84d6;font-weight:400;">Сохранить смену</span><div class="abs btn" style="top:438px"></div><div class="abs btn" style="top:488px"></div><span class="t" style="left:107px;top:451px;font-size:16px;color:#fff;font-weight:400;">Просмотр</span><span class="t" style="left:76px;top:501px;font-size:16px;color:#fff;font-weight:400;">Зарегистрировать</span><div class="abs" style="left:287.15px;top:213px;width:1.95px;height:667px;background:#cbccd3"></div><div class="abs" style="left:300px;top:72px;width:90px;height:38px;background:#fff;border:1px solid #e4e6ea"></div><svg class="abs" style="left:318px;top:83px" width="14" height="16" viewBox="0 0 14 16" ><path d="M3.4 1.9H8.2L11.6 5.3V12.6Q11.6 14.1 10.1 14.1H3.4Q1.9 14.1 1.9 12.6V3.4Q1.9 1.9 3.4 1.9Z" fill="none" stroke="#1f2937" stroke-width="1.45" stroke-linejoin="round"/><path d="M4.6 8.5H8.9M4.6 11H8.9" stroke="#1f2937" stroke-width="1.3"/></svg><span class="t" style="left:339px;top:84px;font-size:14px;color:#2b2f36;font-weight:400;">Файл</span><div class="tb" style="left:300px;top:124px;width:44.00px;height:32.00px"></div><div class="tb dis" style="left:344px;top:124px;width:44.00px;height:32.00px"></div><div class="tb" style="left:396px;top:124px;width:70.00px;height:32.00px"></div><div class="tb" style="left:466px;top:124px;width:122.00px;height:32.00px"></div><div class="tb" style="left:596px;top:124px;width:44.00px;height:32.00px"></div><div class="tb" style="left:640px;top:124px;width:44.00px;height:32.00px"></div><div class="tb" style="left:684px;top:124px;width:44.00px;height:32.00px"></div><div class="tb" style="left:728px;top:124px;width:44.00px;height:32.00px"></div><div class="tb" style="left:780px;top:124px;width:64.00px;height:32.00px"></div><div class="tb" style="left:844px;top:124px;width:64.00px;height:32.00px"></div><div class="tb" style="left:916px;top:124px;width:34.00px;height:32.00px"></div><div class="tb" style="left:950px;top:124px;width:34.00px;height:32.00px"></div><div class="tb" style="left:992px;top:124px;width:117.00px;height:32.00px"></div><div class="tb" style="left:1117px;top:124px;width:44.00px;height:32.00px"></div><div class="tb dis" style="left:1169px;top:124px;width:44.00px;height:32.00px"></div><div class="tb" style="left:1221px;top:124px;width:44.00px;height:32.00px"></div><svg class="abs" style="left:312.8px;top:131px" width="18" height="18" viewBox="0 0 24 24"><path d="M12.5 8c-2.65 0-5.05.99-6.9 2.6L2 7v9h9l-3.62-3.62c1.39-1.16 3.16-1.88 5.12-1.88 3.54 0 6.55 2.31 7.6 5.5l2.37-.78C21.08 11.03 17.15 8 12.5 8z" fill="#0a0a0a"/></svg><svg class="abs" style="left:357.0px;top:131px" width="18" height="18" viewBox="0 0 24 24"><path d="M18.4 10.6C16.55 8.99 14.15 8 11.5 8c-4.65 0-8.58 3.03-9.96 7.22L3.9 16c1.05-3.19 4.05-5.5 7.6-5.5 1.95 0 3.73.72 5.12 1.88L13 16h9V7l-3.6 3.6z" fill="#a9abae"/></svg><div class="abs" style="left:413px;top:130px;width:20px;height:20px;background:#e8eefc;border-radius:2px"></div><span class="t" style="left:416.6px;top:134px;font-size:12.5px;color:#4a7fe6;font-weight:700;">10</span><svg class="abs" style="left:443.5px;top:136.2px" width="11" height="8" viewBox="0 0 11 8" ><path d="M2.1 2.3L5.5 5.6L8.9 2.3" fill="none" stroke="#1a1a1a" stroke-width="1.55" stroke-linecap="round" stroke-linejoin="round"/></svg><div class="abs" style="left:480.6px;top:133px;width:15.2px;height:13.7px;background:#111"></div><span class="t" style="left:483.0px;top:133px;font-size:14.4px;color:#fff;font-weight:700;">A</span><div class="abs" style="left:505px;top:130px;width:50px;height:20px;background:#e8eefc;border-radius:2px"></div><span class="t" style="left:518.6px;top:134px;font-size:11.6px;color:#4a7fe6;font-weight:700;letter-spacing:-0.45px;">Arial</span><svg class="abs" style="left:565.5px;top:136.2px" width="11" height="8" viewBox="0 0 11 8" ><path d="M2.1 2.3L5.5 5.6L8.9 2.3" fill="none" stroke="#1a1a1a" stroke-width="1.55" stroke-linecap="round" stroke-linejoin="round"/></svg><svg class="abs" style="left:609.1px;top:131.3px" width="18" height="18" viewBox="0 0 24 24"><path d="M15.6 10.79c.97-.67 1.65-1.77 1.65-2.79 0-2.26-1.75-4-4-4H7v14h7.04c2.09 0 3.71-1.7 3.71-3.79 0-1.52-.86-2.82-2.15-3.42zM10 6.5h3c.83 0 1.5.67 1.5 1.5s-.67 1.5-1.5 1.5h-3v-3zm3.5 9H10v-3h3.5c.83 0 1.5.67 1.5 1.5s-.67 1.5-1.5 1.5z" fill="#111"/></svg><svg class="abs" style="left:652.9px;top:131.3px" width="18" height="18" viewBox="0 0 24 24"><path d="M10 4v3h2.21l-3.42 8H6v3h8v-3h-2.21l3.42-8H18V4z" fill="#111"/></svg><svg class="abs" style="left:696.9px;top:131.2px" width="18" height="18" viewBox="0 0 24 24"><path d="M12 17c3.31 0 6-2.69 6-6V3h-2.5v8c0 1.93-1.57 3.5-3.5 3.5S8.5 12.93 8.5 11V3H6v8c0 3.31 2.69 6 6 6zm-7 2v2h14v-2H5z" fill="#111"/></svg><svg class="abs" style="left:740.7px;top:131.0px" width="18" height="18" viewBox="0 0 24 24"><path d="M4 19h6v-2H4v2zM20 5H4v2h16V5zm-3 6H4v2h13.25c1.1 0 2 .9 2 2s-.9 2-2 2H15v-2l-3 3 3 3v-2h2c2.21 0 4-1.79 4-4s-1.79-4-4-4z" fill="#111"/></svg><svg class="abs" style="left:792.6px;top:130.6px" width="18.8" height="18.8" viewBox="0 0 24 24"><path d="M15 15H3v2h12v-2zm0-8H3v2h12V7zM3 13h18v-2H3v2zm0 8h18v-2H3v2zM3 3v2h18V3H3z" fill="#0a0a0a"/></svg><svg class="abs" style="left:821.5px;top:136.2px" width="11" height="8" viewBox="0 0 11 8" ><path d="M2.1 2.3L5.5 5.6L8.9 2.3" fill="none" stroke="#1a1a1a" stroke-width="1.55" stroke-linecap="round" stroke-linejoin="round"/></svg><svg class="abs" style="left:856.6px;top:130.6px" width="18.6" height="18.6" viewBox="0 0 24 24"><path d="M8 11h3v10h2V11h3l-4-4-4 4zM4 3v2h16V3H4z" fill="#0a0a0a"/></svg><svg class="abs" style="left:885.6px;top:136.2px" width="11" height="8" viewBox="0 0 11 8" ><path d="M2.1 2.3L5.5 5.6L8.9 2.3" fill="none" stroke="#1a1a1a" stroke-width="1.55" stroke-linecap="round" stroke-linejoin="round"/></svg><svg class="abs" style="left:921.9px;top:129.1px" width="22" height="22" viewBox="0 0 24 24"><path d="M16.56 8.94L7.62 0 6.21 1.41l2.38 2.38-5.15 5.15c-.59.59-.59 1.54 0 2.12l5.5 5.5c.29.29.68.44 1.06.44s.77-.15 1.06-.44l5.5-5.5c.59-.58.59-1.53 0-2.12zM5.21 10L10 5.21 14.79 10H5.21zM19 11.5s-2 2.17-2 3.5c0 1.1.9 2 2 2s2-.9 2-2c0-1.33-2-3.5-2-3.5z" fill="#6b6b6b"/></svg><div class="abs" style="left:921px;top:149px;width:24px;height:4px;background:#fff;border:1px solid #d4d4d4"></div><span class="t" style="left:960.2px;top:130px;font-size:17.8px;color:#5c5c5c;font-weight:700;">A</span><div class="abs" style="left:955.5px;top:149.6px;width:23px;height:2.6px;background:#0a0a0a"></div><svg class="abs" style="left:1006px;top:134px" width="16" height="11" viewBox="0 0 16 11"><text x="0" y="0" transform="translate(1.8 7.8) scale(1.32 1)" font-family="Liberation Sans" font-weight="700" font-size="5.6" fill="#111">123</text></svg><div class="abs" style="left:1031px;top:130px;width:45px;height:20px;background:#e8eefc;border-radius:2px"></div><span class="t" style="left:1035.9px;top:134px;font-size:11.7px;color:#4a86e8;font-weight:400;-webkit-text-stroke:0.4px #4a86e8;">123,45</span><svg class="abs" style="left:1086.3px;top:136.2px" width="11" height="8" viewBox="0 0 11 8" ><path d="M2.1 2.3L5.5 5.6L8.9 2.3" fill="none" stroke="#1a1a1a" stroke-width="1.55" stroke-linecap="round" stroke-linejoin="round"/></svg><svg class="abs" style="left:1129.7px;top:130.8px" width="18.4" height="18.4" viewBox="0 0 24 24"><path d="M15 21h2v-2h-2v2zm4 0h2v-2h-2v2zM7 21h2v-2H7v2zm4 0h2v-2h-2v2zm8-4h2v-2h-2v2zm0-4h2v-2h-2v2zM3 3v18h2V5h16V3H3zm16 6h2V7h-2v2z" fill="#0a0a0a"/></svg><svg class="abs" style="left:1183.5px;top:135px" width="16" height="10" viewBox="0 0 16 10" ><path d="M1.2 0V10M3.6 0V10M6.1 0V10M8.7 0V10M11.2 0V10M13.7 0V10" stroke="#b4b6b9" stroke-width="1.9"/></svg><svg class="abs" style="left:1233.6px;top:131.5px" width="18.2" height="18.2" viewBox="0 0 24 24"><path d="M20 2H4c-1.1 0-2 .9-2 2v16c0 1.1.9 2 2 2h16c1.1 0 2-.9 2-2V4c0-1.1-.9-2-2-2zM8 20H4v-4h4v4zm0-6H4v-4h4v4zm0-6H4V4h4v4zm6 12h-4v-4h4v4zm0-6h-4v-4h4v4zm0-6h-4V4h4v4zm6 12h-4v-4h4v4zm0-6h-4v-4h4v4zm0-6h-4V4h4v4z" fill="#0a0a0a"/></svg><div class="abs" style="left:300px;top:174px;width:28px;height:28px;background:#e8effd;border-radius:3.5px"></div><div class="abs" style="left:309.4px;top:184px;width:9.6px;height:3px;background:#1f6fe8"></div><div class="abs" style="left:309.4px;top:189.3px;width:9.6px;height:2.7px;background:#1f6fe8"></div><svg class="abs" style="left:330px;top:168px" width="1532" height="40" viewBox="330 168 1532 40"><rect x="336.6" y="172.4" width="1518.7" height="31.05" fill="#fff" stroke="#2276e8" stroke-width="1.45"/></svg><span class="t" style="left:345.2px;top:181px;font-size:14px;color:#2b7de9;font-weight:400;">=C16-F16+E16</span><div class="abs" style="left:1868px;top:175px;width:40px;height:26px;background:#e9eaee;border-radius:3.5px"></div><span class="t" style="left:1876.2px;top:181px;font-size:13px;color:#5f6368;font-weight:400;">D16</span><div class="abs" style="left:296px;top:885px;width:32px;height:32px;background:#f4f4f4;border:1px solid #e0e0e0"></div><div class="abs" style="left:306.8px;top:899.3px;width:10.6px;height:2.5px;background:#63c2b5"></div><div class="abs" style="left:310.85px;top:895.2px;width:2.5px;height:10.7px;background:#63c2b5"></div><div class="abs" style="left:330px;top:885px;width:32px;height:32px;background:#f4f4f4;border:1px solid #e0e0e0"></div><svg class="abs" style="left:339px;top:892.6px" width="14" height="15" viewBox="0 0 14 15" ><path d="M13.2 1V14.4L0.8 7.7Z" fill="#666"/></svg><div class="abs" style="left:370px;top:885px;width:130px;height:32px;background:#fff;border:1px solid #e2e2e6;border-bottom:2px solid #0d9488"></div><span class="t" style="left:387px;top:893px;font-size:16px;color:#1b9c8e;font-weight:400;">Спецтехника</span><div class="abs" style="left:504px;top:885px;width:144px;height:32px;background:#f2f2f2;border:1px solid #e4e4e4"></div><span class="t" style="left:521px;top:893px;font-size:16px;color:#5a5a5a;font-weight:400;">Автотранспорт</span><div class="abs" style="left:652px;top:885px;width:160px;height:32px;background:#f2f2f2;border:1px solid #e4e4e4"></div><span class="t" style="left:669px;top:893px;font-size:16px;color:#5a5a5a;font-weight:400;">Нормы зималето</span><div class="abs" style="left:1880px;top:885px;width:32px;height:32px;background:#f4f4f4;border:1px solid #e0e0e0"></div><svg class="abs" style="left:1888.5px;top:892.6px" width="14" height="15" viewBox="0 0 14 15" ><path d="M0.8 1V14.4L13.2 7.7Z" fill="#666"/></svg></body></html>
